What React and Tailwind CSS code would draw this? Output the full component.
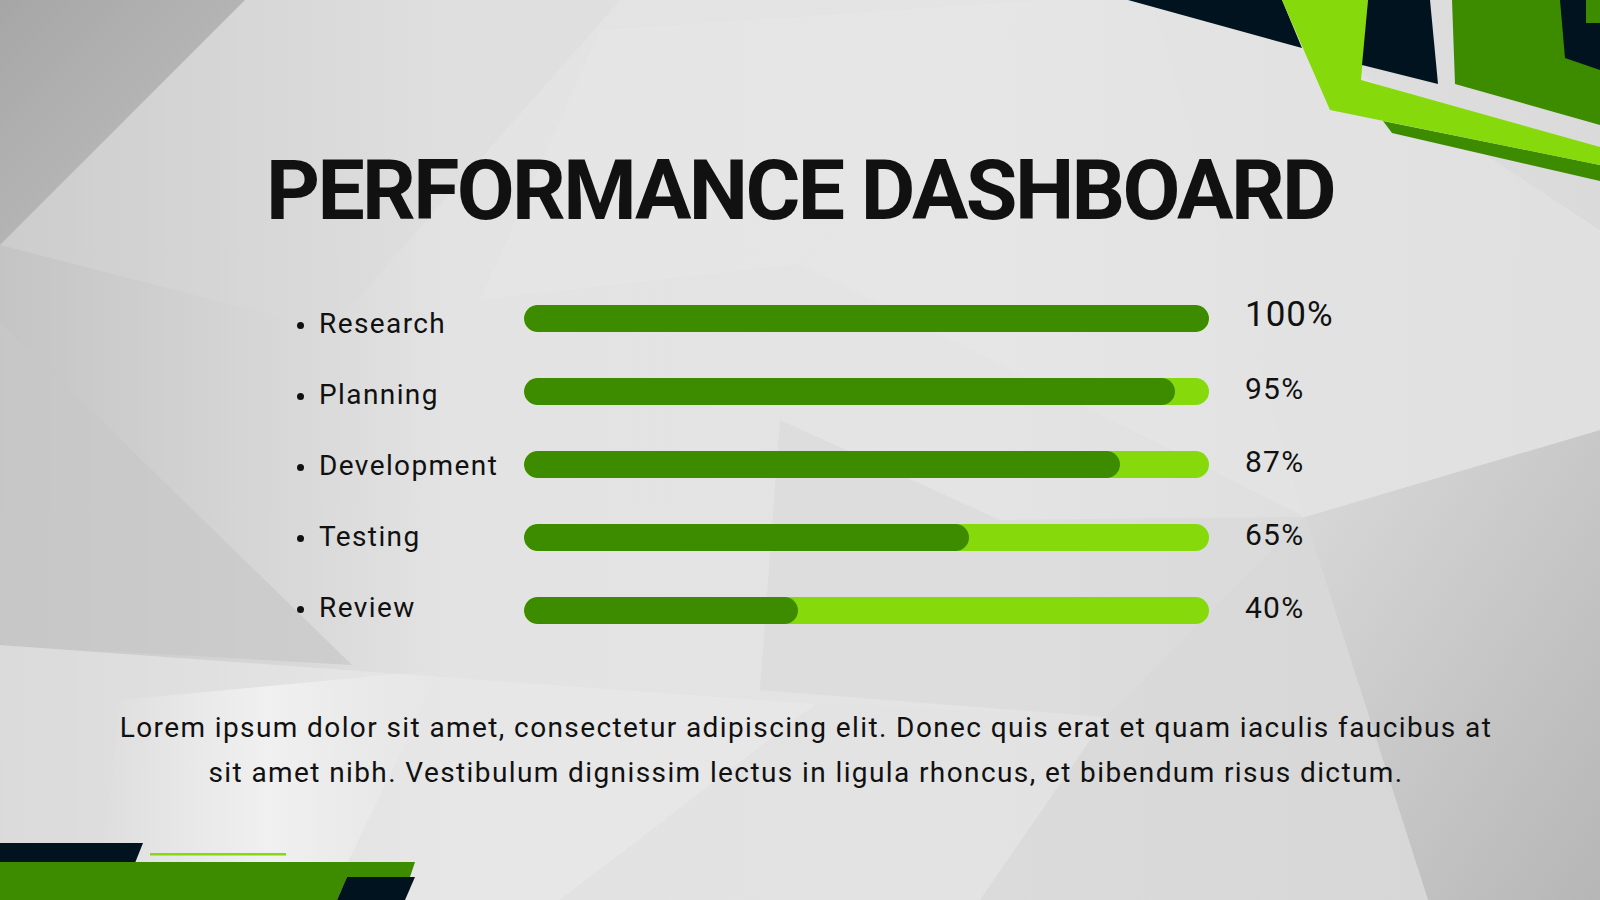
import React from "react";

const rows = [
  { label: "Research", value: 100 },
  { label: "Planning", value: 95 },
  { label: "Development", value: 87 },
  { label: "Testing", value: 65 },
  { label: "Review", value: 40 },
];

// low-poly grey backdrop, drawn once
const Backdrop = () => (
  <svg
    className="absolute inset-0"
    width="1600"
    height="900"
    viewBox="0 0 1600 900"
  >
    <defs>
      <linearGradient id="base" x1="0" y1="0" x2="1" y2="0">
        <stop offset="0" stopColor="#c4c4c4" />
        <stop offset="0.28" stopColor="#e3e3e3" />
        <stop offset="0.62" stopColor="#e4e4e4" />
        <stop offset="1" stopColor="#dadada" />
      </linearGradient>
      <linearGradient id="corner" x1="0" y1="0" x2="1" y2="1">
        <stop offset="0" stopColor="#a6a6a6" />
        <stop offset="1" stopColor="#c2c2c2" />
      </linearGradient>
      <linearGradient id="br" x1="0" y1="0" x2="1" y2="1">
        <stop offset="0" stopColor="#dadada" />
        <stop offset="1" stopColor="#b6b6b6" />
      </linearGradient>
      <linearGradient id="glow" x1="0" y1="0" x2="1" y2="0">
        <stop offset="0" stopColor="#f2f2f2" stopOpacity="0" />
        <stop offset="0.5" stopColor="#f4f4f4" stopOpacity="0.8" />
        <stop offset="1" stopColor="#f2f2f2" stopOpacity="0" />
      </linearGradient>
    </defs>
    <rect width="1600" height="900" fill="url(#base)" />
    <polygon points="0,0 245,0 0,245" fill="url(#corner)" />
    <polygon points="245,0 620,0 330,330 0,245" fill="#d9d9d9" opacity="0.4" />
    <polygon points="0,322 352,665 0,645" fill="#c8c8c8" opacity="0.7" />
    <polygon points="0,645 816,704 560,900 0,900" fill="#e9e9e9" opacity="0.6" />
    <polygon points="120,700 440,670 330,900 100,900" fill="url(#glow)" />
    <polygon points="600,30 1040,0 800,264 480,300" fill="#ececec" opacity="0.25" />
    <polygon points="1040,0 1152,0 1305,517 800,264" fill="#e8e8e8" opacity="0.4" />
    <polygon points="780,420 1000,520 1305,517 1106,717 760,690" fill="#d0d0d0" opacity="0.35" />
    <polygon points="1305,517 1600,430 1600,900 1428,900" fill="url(#br)" />
    <polygon points="1106,717 1305,517 1428,900 980,900" fill="#d2d2d2" opacity="0.5" />
    <polygon points="1152,0 1250,0 1600,230 1600,430 1305,517" fill="#e6e6e6" opacity="0.5" />
    <polygon points="560,900 816,704 1106,717 980,900" fill="#e2e2e2" opacity="0.5" />
  </svg>
);

const CornerTop = () => (
  <svg
    className="absolute top-0 right-0"
    width="480"
    height="190"
    viewBox="1120 0 480 190"
  >
    <polygon points="1128,0 1282,0 1302,48" fill="#00131f" />
    <polygon points="1383,121 1392,133 1600,181 1600,165" fill="#3d8c00" />
    <polygon
      points="1282,0 1368,0 1361,80 1600,147 1600,165 1330,110"
      fill="#86d90b"
    />
    <polygon points="1368,0 1430,0 1438,84 1362,65" fill="#00131f" />
    <polygon points="1452,0 1600,0 1600,125 1455,84" fill="#3d8c00" />
    <polygon
      points="1560,0 1586,0 1586,23 1600,23 1600,70 1565,58"
      fill="#00131f"
    />
  </svg>
);

const CornerBottom = () => (
  <svg
    className="absolute bottom-0 left-0"
    width="420"
    height="60"
    viewBox="0 840 420 60"
  >
    <polygon points="0,843 143,843 135,863 0,863" fill="#00131f" />
    <rect x="150" y="853" width="136" height="2.5" fill="#86d90b" />
    <polygon
      points="0,862 415,862 410,877 347,877 337,900 0,900"
      fill="#3d8c00"
    />
    <polygon points="347,877 415,877 405,900 337,900" fill="#00131f" />
  </svg>
);

export default function App() {
  return (
    <div
      className="relative w-[1600px] h-[900px] overflow-hidden text-[#111111]"
      style={{ fontFamily: "Roboto, 'Liberation Sans', sans-serif" }}
    >
      <Backdrop />
      <CornerTop />
      <CornerBottom />

      <div className="relative flex flex-col">
        <h1 className="mt-[149px] text-center text-[84px] leading-[84px] font-bold tracking-[-2.6px]">
          PERFORMANCE DASHBOARD
        </h1>

        <div className="mt-[71px] ml-[297px] flex">
          <ul className="w-[227px] flex flex-col gap-[31px]">
            {rows.map((r) => (
              <li
                key={r.label}
                className="h-[40px] flex items-center text-[28px] leading-[40px] tracking-[1.4px]"
              >
                <span className="w-[7px] h-[7px] rounded-full bg-[#111111] mr-[15px] mt-[3px]" />
                {r.label}
              </li>
            ))}
          </ul>

          <div className="pt-[1px] flex flex-col gap-[46px]">
            {rows.map((r, i) => (
              <div key={r.label} className="h-[27px] flex items-center">
                <div className="w-[685px] h-[27px] rounded-full bg-[#86d90b] overflow-hidden">
                  <div
                    className="h-full rounded-full bg-[#3d8c00]"
                    style={{ width: `${r.value}%` }}
                  />
                </div>
                <span
                  className={
                    i === 0
                      ? "ml-[36px] mb-[8px] text-[35px] leading-[35px] tracking-[1px]"
                      : "ml-[36px] mb-[6px] text-[30px] leading-[30px] tracking-[1.2px]"
                  }
                >
                  {r.value}%
                </span>
              </div>
            ))}
          </div>
        </div>

        <p className="mt-[77px] pl-[12px] text-center text-[28px] leading-[45px] tracking-[1.4px]">
          Lorem ipsum dolor sit amet, consectetur adipiscing elit. Donec quis
          erat et quam iaculis faucibus at
          <br />
          sit amet nibh. Vestibulum dignissim lectus in ligula rhoncus, et
          bibendum risus dictum.
        </p>
      </div>
    </div>
  );
}
